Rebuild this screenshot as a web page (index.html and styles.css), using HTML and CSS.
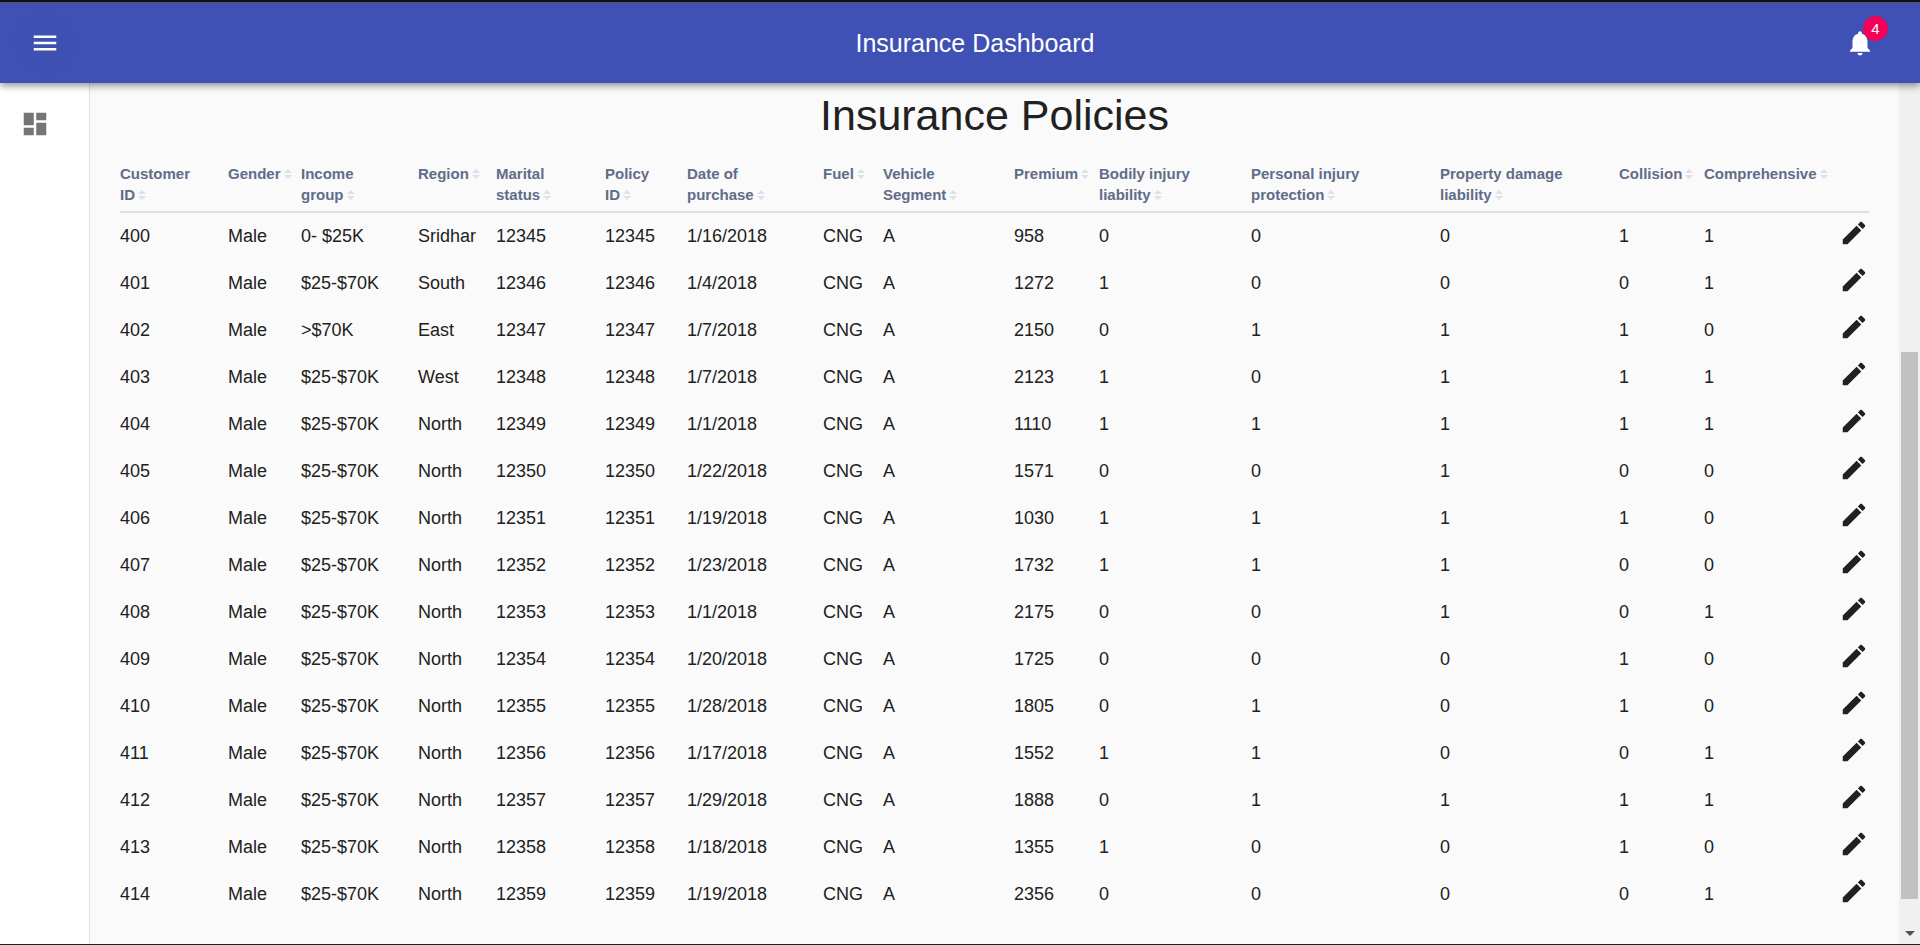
FILE: index.html
```html
<!DOCTYPE html>
<html lang="en">
<head>
<meta charset="utf-8">
<title>Insurance Dashboard</title>
<link rel="stylesheet" href="styles.css">
</head>
<body>
<svg class="sprite" aria-hidden="true">
  <symbol id="sort" viewBox="0 0 8 10"><path d="M0 4L4 0L8 4ZM0 6H8L4 10Z"/></symbol>
  <symbol id="edit" viewBox="0 0 24 24"><path d="M3 17.25V21h3.750L17.810 9.940l-3.750-3.750L3 17.250zM20.710 7.040c.390-.390.390-1.020 0-1.410l-2.340-2.340c-.390-.390-1.020-.390-1.410 0l-1.830 1.830 3.750 3.750 1.830-1.830z"/></symbol>
</svg>
<header class="appbar">
  <button class="icon-button menu" type="button" aria-label="Open menu">
    <svg class="icon" viewBox="0 0 24 24"><path d="M3 18h18v-2H3v2zm0-5h18v-2H3v2zm0-7v2h18V6H3z"/></svg>
  </button>
  <h1 class="appbar-title">Insurance Dashboard</h1>
  <button class="icon-button" type="button" aria-label="4 notifications">
    <span class="badge-anchor">
      <svg class="icon" viewBox="0 0 24 24"><path d="M12 22c1.100 0 2-.9 2-2h-4c0 1.100.890 2 2 2zm6-6v-5c0-3.070-1.640-5.640-4.500-6.320V4c0-.830-.670-1.500-1.500-1.500s-1.500.670-1.500 1.500v.680C7.630 5.360 6 7.920 6 11v5l-2 2v1h16v-1l-2-2z"/></svg>
      <span class="badge">4</span>
    </span>
  </button>
</header>
<div class="shell">
  <nav class="sidebar">
    <a class="nav-link" href="#" aria-label="Dashboard"><svg class="icon" viewBox="0 0 24 24"><path d="M3 13h8V3H3v10zm0 8h8v-6H3v6zm10 0h8V11h-8v10zm0-18v6h8V3h-8z"/></svg></a>
  </nav>
  <main class="content">
    <h2 class="title">Insurance Policies</h2>
    <table class="policies">
      <colgroup>
        <col class="c-customer"><col class="c-gender"><col class="c-income"><col class="c-region"><col class="c-marital"><col class="c-policy"><col class="c-date"><col class="c-fuel"><col class="c-segment"><col class="c-premium"><col class="c-bodily"><col class="c-personal"><col class="c-property"><col class="c-collision"><col class="c-comprehensive"><col class="c-edit">
      </colgroup>
      <thead><tr id="head"></tr></thead>
      <tbody id="rows"></tbody>
    </table>
  </main>
  <div class="scrollbar" aria-hidden="true">
    <div class="scroll-thumb"></div>
    <svg class="scroll-arrow" viewBox="0 0 10 5"><path d="M0 0H10L5 5Z"/></svg>
  </div>
</div>
<script src="app.js"></script>
</body>
</html>
```
FILE: styles.css
```css
* { box-sizing: border-box; }
body {
  margin: 0;
  height: 100vh;
  display: flex;
  flex-direction: column;
  overflow: hidden;
  border-bottom: 1px solid #1b222c;
  background: #fafafa;
  color: #212121;
  font-family: "Liberation Sans", Arial, sans-serif;
  font-size: 18px;
}
button { margin: 0; padding: 0; border: 0; background: none; color: inherit; font: inherit; cursor: pointer; }
.sprite { display: none; }
.icon { display: block; width: 30px; height: 30px; fill: currentColor; }

.appbar {
  position: relative;
  z-index: 1;
  flex: none;
  display: flex;
  align-items: center;
  height: 83px;
  padding: 1px 30px 0 15px;
  border-top: 2px solid #111;
  background: #3f51b5;
  color: #fff;
  box-shadow: inset 0 1px #55555c, 0 3px 5px -1px rgba(0,0,0,.2), 0 5px 6px 0 rgba(0,0,0,.14), 0 1px 12px 0 rgba(0,0,0,.12);
}
.icon-button { display: grid; place-items: center; width: 60px; height: 60px; border-radius: 50%; }
.menu { margin-right: 45px; background: #3e50b1; }
.appbar-title { flex: 1; margin: 0; text-align: center; font-size: 25px; line-height: 40px; font-weight: 400; }
.badge-anchor { position: relative; }
.badge {
  position: absolute;
  top: -12px;
  right: -13px;
  width: 25px;
  height: 25px;
  border-radius: 50%;
  background: #f50057;
  font-size: 15px;
  line-height: 26px;
  text-align: center;
}

.shell { flex: 1; display: flex; min-height: 0; }
.sidebar { flex: none; width: 90px; padding: 26px 20px; border-right: 1px solid #e0e0e0; background: #fff; color: #757575; }
.nav-link { display: block; width: 30px; color: inherit; }
.content { flex: 1; min-width: 0; padding: 7px 30px 0; overflow: hidden; }
.title { margin: 0; text-align: center; font-size: 43px; line-height: 50px; font-weight: 400; }

.policies { width: 100%; margin-top: 16px; border-collapse: separate; border-spacing: 0; table-layout: fixed; }
.policies th { height: 57px; padding: 7px 0 5px; vertical-align: top; text-align: left; border-bottom: 2px solid #dfdfe6; }
.sort { display: block; text-align: left; white-space: nowrap; color: #606c88; font-size: 15px; line-height: 21px; font-weight: 700; }
.sort svg { width: 8px; height: 10px; margin-left: 3px; fill: #dfdfe6; }
.policies td { height: 47px; padding: 0 0 2px; line-height: 24px; white-space: nowrap; }
.edit { display: block; margin-bottom: 6px; }
.edit svg { display: block; }
.c-customer { width: 108px; }
.c-gender { width: 73px; }
.c-income { width: 117px; }
.c-region { width: 78px; }
.c-marital { width: 109px; }
.c-policy { width: 82px; }
.c-date { width: 136px; }
.c-fuel { width: 60px; }
.c-segment { width: 131px; }
.c-premium { width: 85px; }
.c-bodily { width: 152px; }
.c-personal { width: 189px; }
.c-property { width: 179px; }
.c-collision { width: 85px; }
.c-comprehensive { width: 135px; }
.c-edit { width: 30px; }

.scrollbar { flex: none; display: flex; flex-direction: column; align-items: center; width: 21px; background: #f0f0f0; }
.scroll-thumb { width: 17px; height: 547px; margin-top: auto; background: #c1c1c1; }
.scroll-arrow { width: 10px; height: 5px; margin: 32px 0 8px; fill: #505050; }
```
FILE: app.js
```javascript
const headings = [
  "Customer<br>ID", "Gender", "Income<br>group", "Region", "Marital<br>status", "Policy<br>ID",
  "Date of<br>purchase", "Fuel", "Vehicle<br>Segment", "Premium", "Bodily injury<br>liability",
  "Personal injury<br>protection", "Property damage<br>liability", "Collision", "Comprehensive"
];

// region, income, date, premium, bodily, personal, property, collision, comprehensive
const policies = [
  ["Sridhar", "0- $25K", "1/16/2018", 958, 0, 0, 0, 1, 1],
  ["South", "$25-$70K", "1/4/2018", 1272, 1, 0, 0, 0, 1],
  ["East", "&gt;$70K", "1/7/2018", 2150, 0, 1, 1, 1, 0],
  ["West", "$25-$70K", "1/7/2018", 2123, 1, 0, 1, 1, 1],
  ["North", "$25-$70K", "1/1/2018", 1110, 1, 1, 1, 1, 1],
  ["North", "$25-$70K", "1/22/2018", 1571, 0, 0, 1, 0, 0],
  ["North", "$25-$70K", "1/19/2018", 1030, 1, 1, 1, 1, 0],
  ["North", "$25-$70K", "1/23/2018", 1732, 1, 1, 1, 0, 0],
  ["North", "$25-$70K", "1/1/2018", 2175, 0, 0, 1, 0, 1],
  ["North", "$25-$70K", "1/20/2018", 1725, 0, 0, 0, 1, 0],
  ["North", "$25-$70K", "1/28/2018", 1805, 0, 1, 0, 1, 0],
  ["North", "$25-$70K", "1/17/2018", 1552, 1, 1, 0, 0, 1],
  ["North", "$25-$70K", "1/29/2018", 1888, 0, 1, 1, 1, 1],
  ["North", "$25-$70K", "1/18/2018", 1355, 1, 0, 0, 1, 0],
  ["North", "$25-$70K", "1/19/2018", 2356, 0, 0, 0, 0, 1]
];

document.getElementById("head").innerHTML = headings
  .map(h => `<th scope="col"><button class="sort" type="button">${h}<svg><use href="#sort"/></svg></button></th>`)
  .join("") + "<th></th>";

document.getElementById("rows").innerHTML = policies.map(([region, income, date, ...rest], i) => {
  const cells = [400 + i, "Male", income, region, 12345 + i, 12345 + i, date, "CNG", "A", ...rest];
  return `<tr>${cells.map(c => `<td>${c}</td>`).join("")}<td><button class="edit" type="button" aria-label="Edit policy ${400 + i}"><svg class="icon"><use href="#edit"/></svg></button></td></tr>`;
}).join("");
```
